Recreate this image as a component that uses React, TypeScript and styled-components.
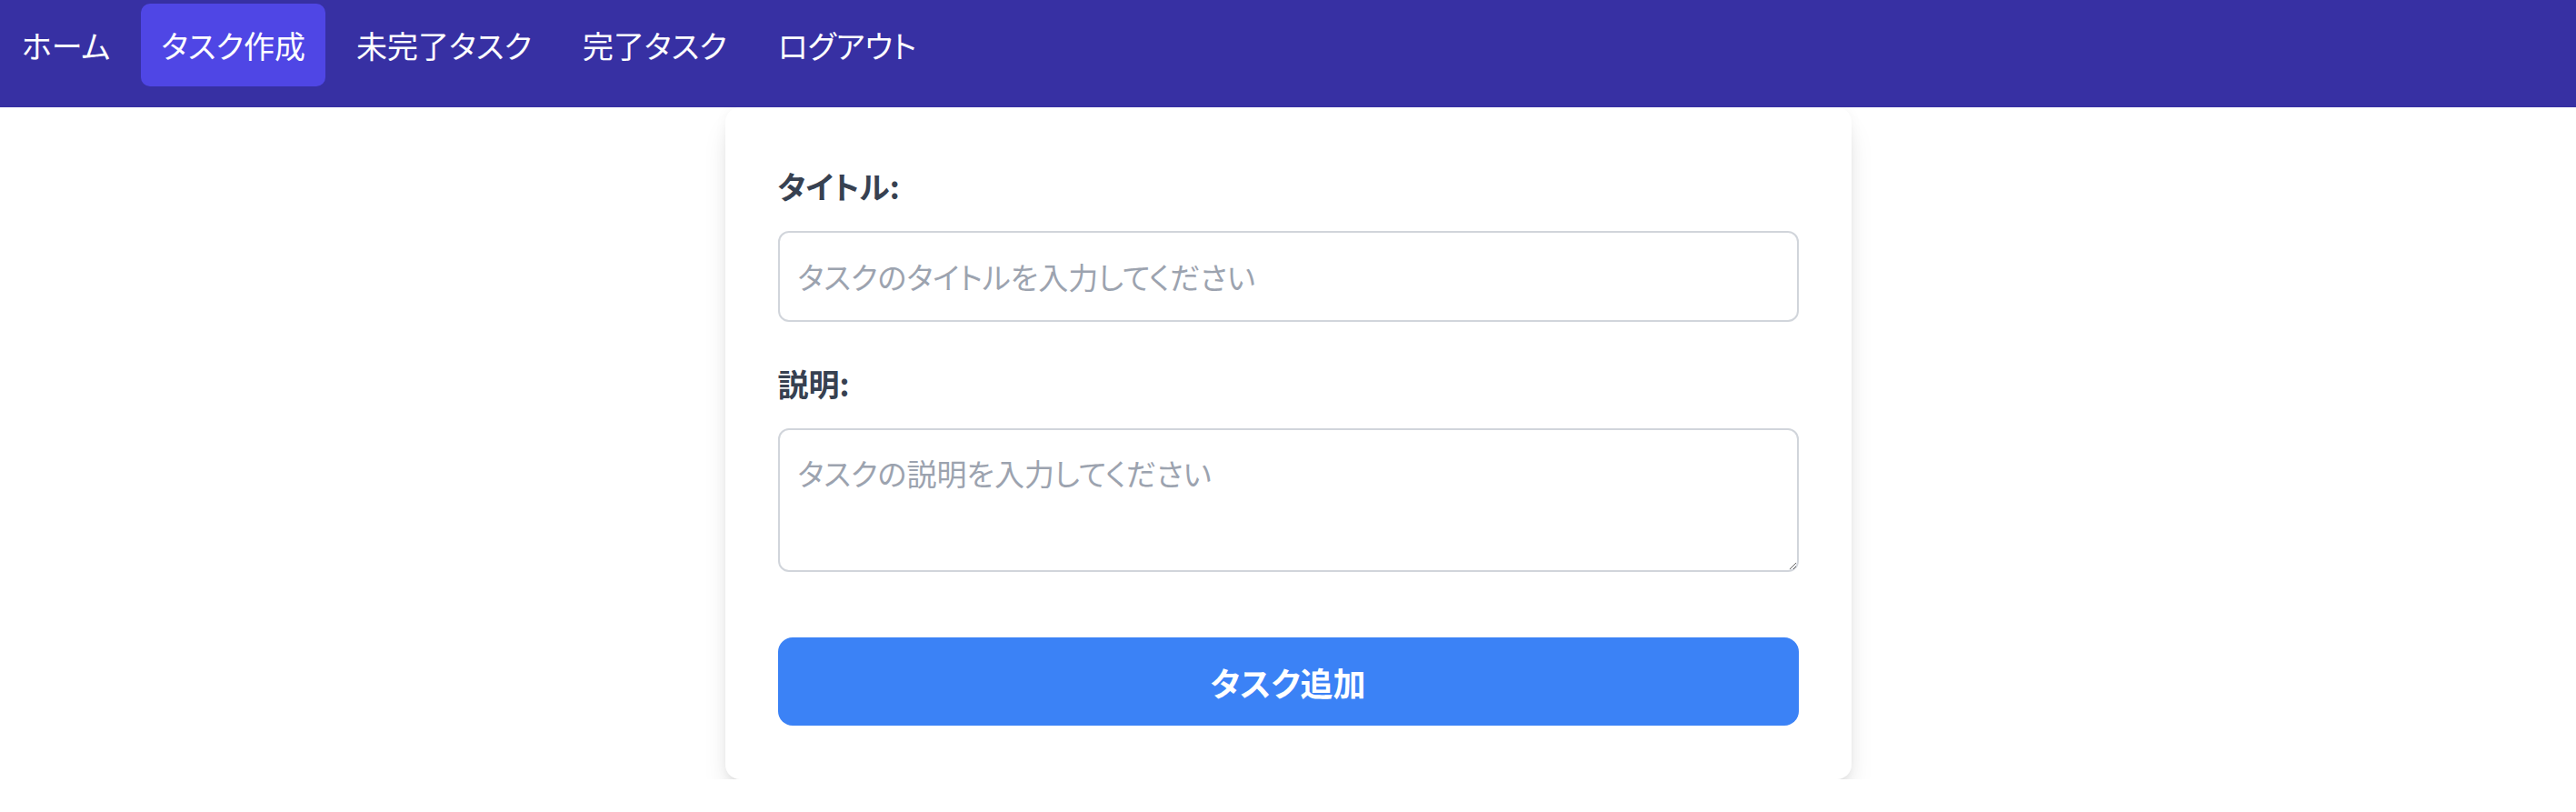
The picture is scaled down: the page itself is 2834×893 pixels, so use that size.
import React from "react";
import styled, { createGlobalStyle } from "styled-components";

const GlobalStyle = createGlobalStyle`
  html, body {
    margin: 0;
    padding: 0;
    background: #ffffff;
  }
  body {
    font-family: "Noto Sans CJK JP", "Noto Sans", sans-serif;
    font-feature-settings: "palt";
  }
  *, *::before, *::after {
    box-sizing: border-box;
  }
`;

const NavBar = styled.nav`
  height: 118px;
  background: #3730a3;
  display: flex;
  align-items: flex-start;
  gap: 12px;
  padding: 4px 0 0 2px;
  position: relative;
  z-index: 1;
`;

const NavItem = styled.a<{ $active?: boolean }>`
  height: 91px;
  display: flex;
  align-items: center;
  padding: 0 22px;
  border-radius: 10px;
  color: #ffffff;
  font-size: 34px;
  line-height: 1;
  text-decoration: none;
  background: ${(p) => (p.$active ? "#4f46e5" : "transparent")};
  cursor: pointer;
`;

const Main = styled.main`
  display: flex;
  justify-content: center;
`;

const Card = styled.form`
  width: 1239px;
  background: #ffffff;
  border-radius: 16px;
  padding: 62px 58px 59px;
  box-shadow: 0 20px 30px -6px rgba(0, 0, 0, 0.13),
    0 8px 12px -8px rgba(0, 0, 0, 0.12), 0 0 14px rgba(0, 0, 0, 0.04);
  display: flex;
  flex-direction: column;
`;

const Field = styled.div<{ $gap: number }>`
  display: flex;
  flex-direction: column;
  margin-bottom: ${(p) => p.$gap}px;
`;

const Label = styled.label`
  font-size: 34px;
  line-height: 50px;
  font-weight: 700;
  color: #374151;
  margin-bottom: 24px;
`;

const TextInput = styled.input`
  display: block;
  width: 100%;
  height: 100px;
  border: 2px solid #d1d5db;
  border-radius: 12px;
  padding: 0 20px;
  font-family: inherit;
  font-feature-settings: "palt";
  font-size: 33px;
  color: #111827;
  outline: none;
  &::placeholder {
    color: #9ca3af;
  }
`;

const TextArea = styled.textarea`
  display: block;
  width: 100%;
  height: 158px;
  border: 2px solid #d1d5db;
  border-radius: 12px;
  padding: 23px 20px;
  font-family: inherit;
  font-feature-settings: "palt";
  font-size: 33px;
  line-height: 1.5;
  color: #111827;
  outline: none;
  resize: vertical;
  &::placeholder {
    color: #9ca3af;
  }
`;

const SubmitButton = styled.button`
  display: block;
  width: 100%;
  height: 97px;
  border: none;
  border-radius: 16px;
  background: #3b82f6;
  color: #ffffff;
  font-family: inherit;
  font-feature-settings: "palt";
  font-size: 36px;
  font-weight: 700;
  cursor: pointer;
`;

const navItems = [
  { label: "ホーム", active: false },
  { label: "タスク作成", active: true },
  { label: "未完了タスク", active: false },
  { label: "完了タスク", active: false },
  { label: "ログアウト", active: false },
];

export default function App() {
  return (
    <>
      <GlobalStyle />
      <NavBar>
        {navItems.map((item) => (
          <NavItem key={item.label} $active={item.active}>
            {item.label}
          </NavItem>
        ))}
      </NavBar>
      <Main>
        <Card onSubmit={(e) => e.preventDefault()}>
          <Field $gap={43}>
            <Label htmlFor="title">タイトル:</Label>
            <TextInput id="title" type="text" placeholder="タスクのタイトルを入力してください" />
          </Field>
          <Field $gap={72}>
            <Label htmlFor="desc">説明:</Label>
            <TextArea id="desc" placeholder="タスクの説明を入力してください" />
          </Field>
          <SubmitButton type="submit">タスク追加</SubmitButton>
        </Card>
      </Main>
    </>
  );
}
